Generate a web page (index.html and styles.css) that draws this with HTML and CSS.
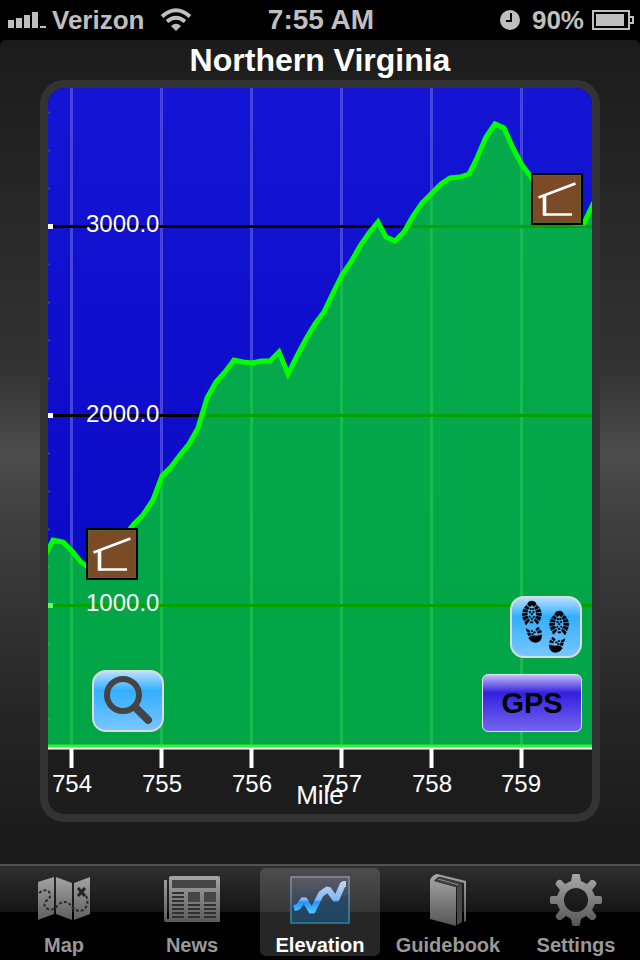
FILE: index.html
```html
<!DOCTYPE html>
<html lang="en">
<head>
    <meta charset="UTF-8">
    <meta name="viewport" content="width=device-width, initial-scale=1.0">
    <title>Northern Virginia - Elevation</title>
    <link rel="stylesheet" href="styles.css">
</head>
<body>
    <header class="status-bar">
        <div class="status-left">
            <svg class="signal" width="38" height="18" viewBox="0 0 38 18" aria-hidden="true">
                <path d="M0 9h6v8H0zM8 7h6v10H8zM16 4h6v13h-6zM24 1h6v16h-6zM32 15h6v2h-6z"/>
            </svg>
            <span class="carrier">Verizon</span>
            <svg class="wifi" width="32" height="24" viewBox="0 0 32 24" aria-hidden="true">
                <path d="M2 8.500Q16 -4 30 8.500" class="wifi-arc"/>
                <path d="M7 13.500Q16 6 25 13.500" class="wifi-arc"/>
                <path d="M11 18Q16 13.500 21 18L16 23Z"/>
            </svg>
        </div>
        <time class="clock">7:55 AM</time>
        <div class="status-right">
            <svg width="20" height="20" viewBox="0 0 20 20" aria-hidden="true">
                <circle cx="10" cy="10" r="10"/>
                <path d="M11 3v8H6" class="clock-hands"/>
            </svg>
            <span class="battery-level">90%</span>
            <svg width="42" height="20" viewBox="0 0 42 20" aria-hidden="true">
                <path d="M1 1h36v18H1zM37 7h4v6h-4" class="battery-case"/>
                <path d="M4 4h28v12H4z"/>
            </svg>
        </div>
    </header>

    <main class="screen">
        <h1 class="title">Northern Virginia</h1>

        <section class="panel">
            <svg class="chart" viewBox="0 0 544 726" role="img" aria-label="Elevation by mile">
                <defs>
                    <linearGradient id="sky" x1="0" y1="0" x2="0" y2="1">
                        <stop offset="0" stop-color="#1414d4"/>
                        <stop offset="1" stop-color="#0707c2"/>
                    </linearGradient>
                    <symbol id="shelter" viewBox="0 0 52 52">
                        <rect x="1" y="1" width="50" height="50" fill="#3f7a35" stroke="#000" stroke-width="2"/>
                        <rect x="2.500" y="2.500" width="47" height="47" rx="2" fill="#7b4b27"/>
                        <path d="M7.500 24.500L44.500 10.500M12.500 41.500H41" fill="none" stroke="#fff" stroke-width="2.600"/>
                        <path d="M13.500 22V42.500" stroke="#fff" stroke-width="3.600"/>
                    </symbol>
                </defs>

                <rect width="544" height="660" fill="url(#sky)"/>

                <!-- grid -->
                <path class="grid-mile" d="M23.500 0V660M113.500 0V660M203.500 0V660M293.500 0V660M383.500 0V660M473.500 0V660"/>
                <path class="grid-feet" d="M0 138.500H544M0 327.500H544M0 517.500H544"/>
                <path class="tick-minor" d="M0 24.500h2M0 62.500h2M0 100.500h2M0 176.500h2M0 214.500h2M0 252.500h2M0 290.500h2M0 365.500h2M0 403.500h2M0 441.500h2M0 479.500h2M0 555.500h2M0 593.500h2M0 631.500h2"/>
                <path class="tick-feet" d="M0 138.500h5M0 327.500h5M0 517.500h5"/>

                <!-- elevation profile -->
                <path class="ground" d="M0 462L5 452L15 454L24 463L33 474L40 479L49 478L60 468L70 460L78 446L86 436L95 427L105 412L114 388L123 379L132 367L141 356L150 340L159 310L168 294L177 284L186 272L195 274L204 275L213 273L222 273L231 264L240 286L249 268L258 251L267 236L276 224L285 205L294 187L303 174L312 158L321 145L330 134L338 149L347 153L356 144L365 128L374 115L384 105L393 96L402 90L412 89L421 86L429 70L438 49L447 36L456 40L465 60L474 77L483 89L495 110L510 128L526 135L536 135L544 118V660H0Z"/>
                <path class="profile" d="M-2 466L5 452L15 454L24 463L33 474L40 479L49 478L60 468L70 460L78 446L86 436L95 427L105 412L114 388L123 379L132 367L141 356L150 340L159 310L168 294L177 284L186 272L195 274L204 275L213 273L222 273L231 264L240 286L249 268L258 251L267 236L276 224L285 205L294 187L303 174L312 158L321 145L330 134L338 149L347 153L356 144L365 128L374 115L384 105L393 96L402 90L412 89L421 86L429 70L438 49L447 36L456 40L465 60L474 77L483 89L495 110L510 128L526 135L536 135L546 114"/>

                <!-- mile axis -->
                <path d="M0 658H544" stroke="#35ee35" stroke-width="3"/>
                <path d="M0 660.500H544" stroke="#fff" stroke-width="2"/>
                <path class="tick-mile" d="M23.500 660V680M113.500 660V680M203.500 660V680M293.500 660V680M383.500 660V680M473.500 660V680"/>

                <g class="label">
                    <text x="38" y="144">3000.0</text>
                    <text x="38" y="334">2000.0</text>
                    <text x="38" y="523">1000.0</text>
                </g>
                <g class="label label-mile">
                    <text x="24" y="704">754</text>
                    <text x="114" y="704">755</text>
                    <text x="204" y="704">756</text>
                    <text x="294" y="704">757</text>
                    <text x="384" y="704">758</text>
                    <text x="473" y="704">759</text>
                    <text class="axis-name" x="272" y="716">Mile</text>
                </g>

                <use href="#shelter" x="38" y="440" width="52" height="52"/>
                <use href="#shelter" x="483" y="85" width="52" height="52"/>
            </svg>

            <div class="controls">
                <button type="button" class="tool-btn" aria-label="Search">
                    <svg width="68" height="58" viewBox="0 0 68 58" aria-hidden="true">
                        <circle cx="29" cy="23" r="16" fill="none" stroke="#444" stroke-width="6"/>
                        <path d="M41 35L54 48" stroke="#444" stroke-width="8" stroke-linecap="round"/>
                    </svg>
                </button>
                <div class="controls-right">
                    <button type="button" class="tool-btn" aria-label="Follow my location">
                        <svg width="68" height="58" viewBox="38 24 204 174" aria-hidden="true">
                            <defs>
                                <g id="boot" stroke="#000" stroke-width="1.500">
                                    <path d="M84 43Q87 33 97 33Q108 33 111 43L104 50L97 46L91 51Z"/>
                                    <path d="M81 46L90 54L86 59L75 53ZM73 56L86 62L84 67L70 65ZM69 69L84 70V75L69 78ZM70 82L84 78L87 83L74 92ZM76 96L88 86L91 91L80 105Z"/>
                                    <path d="M113 46L105 54L108 59L120 53ZM122 56L109 62L110 67L125 65ZM126 69L111 70V75L126 78ZM125 82L111 78L108 83L121 92ZM119 96L107 86L104 91L114 103Z"/>
                                    <path d="M92 55h4v5h-4zM99 55h4v5h-4zM89 64h5v4h-5zM100 64h5v4h-5zM95 70h5v5h-5zM89 78h4v4h-4zM101 79h4v4h-4zM95 84h5v5h-5zM93 95h8v4h-8z"/>
                                    <path d="M80 116L90 121L92 127L83 125ZM84 129L93 129L96 134L88 138ZM109 117L118 111L120 117L112 123ZM114 125L124 120L127 127L115 130ZM96 121h4v4h-4zM103 125h5v4h-5zM98 130h4v4h-4z"/>
                                    <path d="M88 144Q94 137 101 137L112 138L127 134Q128 146 122 152Q116 158 105 157Q94 155 88 144Z"/>
                                </g>
                            </defs>
                            <use href="#boot"/>
                            <use href="#boot" transform="translate(277 30) scale(-1 1)"/>
                        </svg>
                    </button>
                    <button type="button" class="gps-btn">GPS</button>
                </div>
            </div>
        </section>
    </main>

    <nav class="tab-bar">
        <a href="#map" class="tab">
            <svg class="tab-icon" viewBox="0 0 60 60" aria-hidden="true">
                <defs>
                    <linearGradient id="metal" gradientUnits="userSpaceOnUse" x1="0" y1="4" x2="0" y2="56">
                        <stop offset="0" stop-color="#a8a8a8"/>
                        <stop offset="1" stop-color="#555"/>
                    </linearGradient>
                </defs>
                <path fill="url(#metal)" d="M4 12L20 7V44L4 50ZM22 7L38 13V50L22 44ZM40 13L56 7V44L40 50Z"/>
                <path class="trail" d="M5 23Q14 17 16 24Q17 28 12 31Q8 36 14 39Q20 41 24 35Q32 28 38 37Q46 45 52 37Q55 31 52 26"/>
                <path d="M44 18L51 26M51 18L44 26" stroke="#222" stroke-width="3"/>
            </svg>
            <span>Map</span>
        </a>
        <a href="#news" class="tab">
            <svg class="tab-icon" viewBox="0 0 60 60" aria-hidden="true">
                <path fill="url(#metal)" d="M2 10H5V49H7V8Q7 6 9 6H56Q58 6 58 8V52H4Q2 52 2 50Z"/>
                <path fill="#464646" d="M10 10H54V18H10ZM26 22H38V32H26ZM42 22H54V32H42Z"/>
                <path stroke="#303030" stroke-width="2" d="M10 23H22M10 27H22M10 31H22M10 35H22M10 39H22M10 43H22M10 47H22M26 35H38M26 39H38M26 43H38M26 47H38M42 35H54M42 39H54M42 43H54M42 47H54"/>
            </svg>
            <span>News</span>
        </a>
        <a href="#elevation" class="tab tab-active" aria-current="page">
            <svg class="tab-icon" viewBox="0 0 60 60" aria-hidden="true">
                <defs>
                    <linearGradient id="frame" x1="0" y1="0" x2="0" y2="1">
                        <stop offset="0" stop-color="#7c818b"/>
                        <stop offset="1" stop-color="#28708c"/>
                    </linearGradient>
                    <linearGradient id="panel" x1="0" y1="0" x2="0" y2="1">
                        <stop offset="0" stop-color="#5a5c64"/>
                        <stop offset="0.500" stop-color="#3d485c"/>
                        <stop offset="1" stop-color="#1d4353"/>
                    </linearGradient>
                    <linearGradient id="spark" x1="0" y1="0" x2="0" y2="1">
                        <stop offset="0" stop-color="#b4d3f5"/>
                        <stop offset="0.550" stop-color="#83b9f2"/>
                        <stop offset="0.650" stop-color="#2593ff"/>
                        <stop offset="1" stop-color="#4cc6ff"/>
                    </linearGradient>
                </defs>
                <rect x="1" y="7" width="58" height="46" fill="url(#panel)" stroke="url(#frame)" stroke-width="2"/>
                <path fill="#20466c" fill-opacity="0.600" d="M2 36Q30 33 58 25V52H2Z"/>
                <path fill="none" stroke="url(#spark)" stroke-width="6" stroke-linejoin="bevel" d="M4 38L8 37L14 29L22 42L31 24L38 19L46 30L53 14L56 14"/>
            </svg>
            <span>Elevation</span>
        </a>
        <a href="#guidebook" class="tab">
            <svg class="tab-icon" viewBox="0 0 60 60" aria-hidden="true">
                <path fill="url(#metal)" d="M12 10L38 17V56L12 49ZM12 10Q14 5 19 4L48 11V51L46 52V13L20 7L16 11Z"/>
                <path fill="#484848" d="M39 17L44 14V52L39 55Z"/>
                <path fill="none" stroke="#3c3c3c" stroke-width="3" d="M18 10L40 16M21 8L44 14"/>
                <path fill="none" stroke="#8a8a8a" stroke-width="1" d="M20 9L41 15"/>
            </svg>
            <span>Guidebook</span>
        </a>
        <a href="#settings" class="tab">
            <svg class="tab-icon" viewBox="0 0 60 60" aria-hidden="true">
                <path fill="url(#metal)" fill-rule="evenodd" d="M27 4H33Q34 4 34 6L35 11L41 14L45 10Q47 9 50 12Q51 14 50 15L46 20L49 26L54 26Q56 26 56 28V32Q56 34 54 34L49 34L46 40L50 45Q51 47 49 49Q47 51 45 50L40 46L35 49L34 54Q34 56 32 56H28Q26 56 26 54L25 49L20 46L15 50Q13 51 11 49Q9 47 10 45L14 40L11 34L6 34Q4 34 4 32V28Q4 26 6 26L11 26L14 20L10 15Q9 14 11 11Q13 9 15 10L19 14L25 11L26 6Q26 4 27 4ZM30 18A12 12 0 1 0 30 42A12 12 0 1 0 30 18Z"/>
            </svg>
            <span>Settings</span>
        </a>
    </nav>
</body>
</html>
```

FILE: styles.css
```css
* {
    margin: 0;
    padding: 0;
    box-sizing: border-box;
}

body {
    font-family: "Liberation Sans", Arial, Helvetica, sans-serif;
    background: #000;
    color: #fff;
    min-height: 100vh;
    display: flex;
    flex-direction: column;
}

/* status bar */
.status-bar {
    display: grid;
    grid-template-columns: 1fr auto 1fr;
    align-items: center;
    height: 40px;
    padding: 0 6px 0 8px;
    color: #bfbfbf;
    fill: #bfbfbf;
    font-size: 26px;
    font-weight: bold;
}

.status-left,
.status-right {
    display: flex;
    align-items: center;
    gap: 6px;
}

.status-right {
    justify-content: flex-end;
    gap: 8px;
}

.wifi {
    margin-left: 10px;
}

.wifi-arc {
    fill: none;
    stroke: #bfbfbf;
    stroke-width: 4;
}

.clock {
    font-size: 28px;
}

.clock-hands {
    fill: none;
    stroke: #000;
    stroke-width: 2;
}

.battery-level {
    margin-left: 4px;
}

.battery-case {
    fill: none;
    stroke: #bfbfbf;
    stroke-width: 2;
}

/* chart screen */
.screen {
    flex: 1;
    padding: 0 40px 42px;
    border-radius: 6px 6px 0 0;
    background: linear-gradient(#1b1b1b, #333 40%, #4c4c4c 50%, #404040 58%, #272727 80%, #1c1c1c 95%, #191919);
}

.title {
    font-size: 32px;
    line-height: 40px;
    text-align: center;
}

.panel {
    position: relative;
    border: 8px solid #333;
    border-radius: 24px;
    background: #1c1c1c;
    overflow: hidden;
}

.chart {
    display: block;
    width: 100%;
}

.grid-mile {
    stroke: #4444dc;
    stroke-width: 3;
}

.grid-feet {
    stroke: #000;
    stroke-width: 3;
}

.tick-minor {
    stroke: #44446a;
    stroke-width: 2;
}

.tick-feet {
    stroke: #fff;
    stroke-width: 5;
}

.tick-mile {
    stroke: #fff;
    stroke-width: 4;
}

.ground {
    fill: #0f0;
    fill-opacity: 0.64;
}

.profile {
    fill: none;
    stroke: #0f0;
    stroke-width: 5;
}

.label {
    fill: #fff;
    font-size: 24px;
}

.label-mile {
    text-anchor: middle;
}

.axis-name {
    font-size: 26px;
}

/* buttons over the chart */
.controls {
    position: absolute;
    left: 44px;
    right: 10px;
    bottom: 82px;
    display: flex;
    justify-content: space-between;
    align-items: flex-end;
}

.controls-right {
    display: flex;
    flex-direction: column;
    align-items: flex-end;
    gap: 16px;
}

.tool-btn {
    border: 2px solid #dcdcdc;
    border-radius: 14px;
    background: linear-gradient(#b5deff, #34aeff 32%, #78c6ff);
    cursor: pointer;
}

.tool-btn svg {
    display: block;
}

.gps-btn {
    width: 100px;
    height: 58px;
    border: 1px solid #e4e0ff;
    border-radius: 6px;
    background: linear-gradient(#c3bdf5, #3420df 32%, #7466ec);
    color: #000;
    font-family: inherit;
    font-size: 29px;
    font-weight: bold;
    cursor: pointer;
}

/* tab bar */
.tab-bar {
    display: grid;
    grid-template-columns: repeat(5, 1fr);
    height: 96px;
    padding: 2px 0 4px;
    border-top: 2px solid #505050;
    background: linear-gradient(#2f2f2f, #151515 46px, #000 46px);
}

.tab {
    display: flex;
    flex-direction: column;
    align-items: center;
    height: 88px;
    margin: 0 4px;
    padding-top: 2px;
    border-radius: 6px;
    color: #999;
    font-size: 20px;
    font-weight: bold;
    line-height: 30px;
    text-decoration: none;
}

.tab-active {
    background: rgba(255, 255, 255, 0.15);
    color: #fff;
}

.tab-icon {
    flex: none;
    width: 60px;
    height: 60px;
}

.trail {
    fill: none;
    stroke: #2a2a2a;
    stroke-width: 2;
    stroke-dasharray: 3 2;
}
```
